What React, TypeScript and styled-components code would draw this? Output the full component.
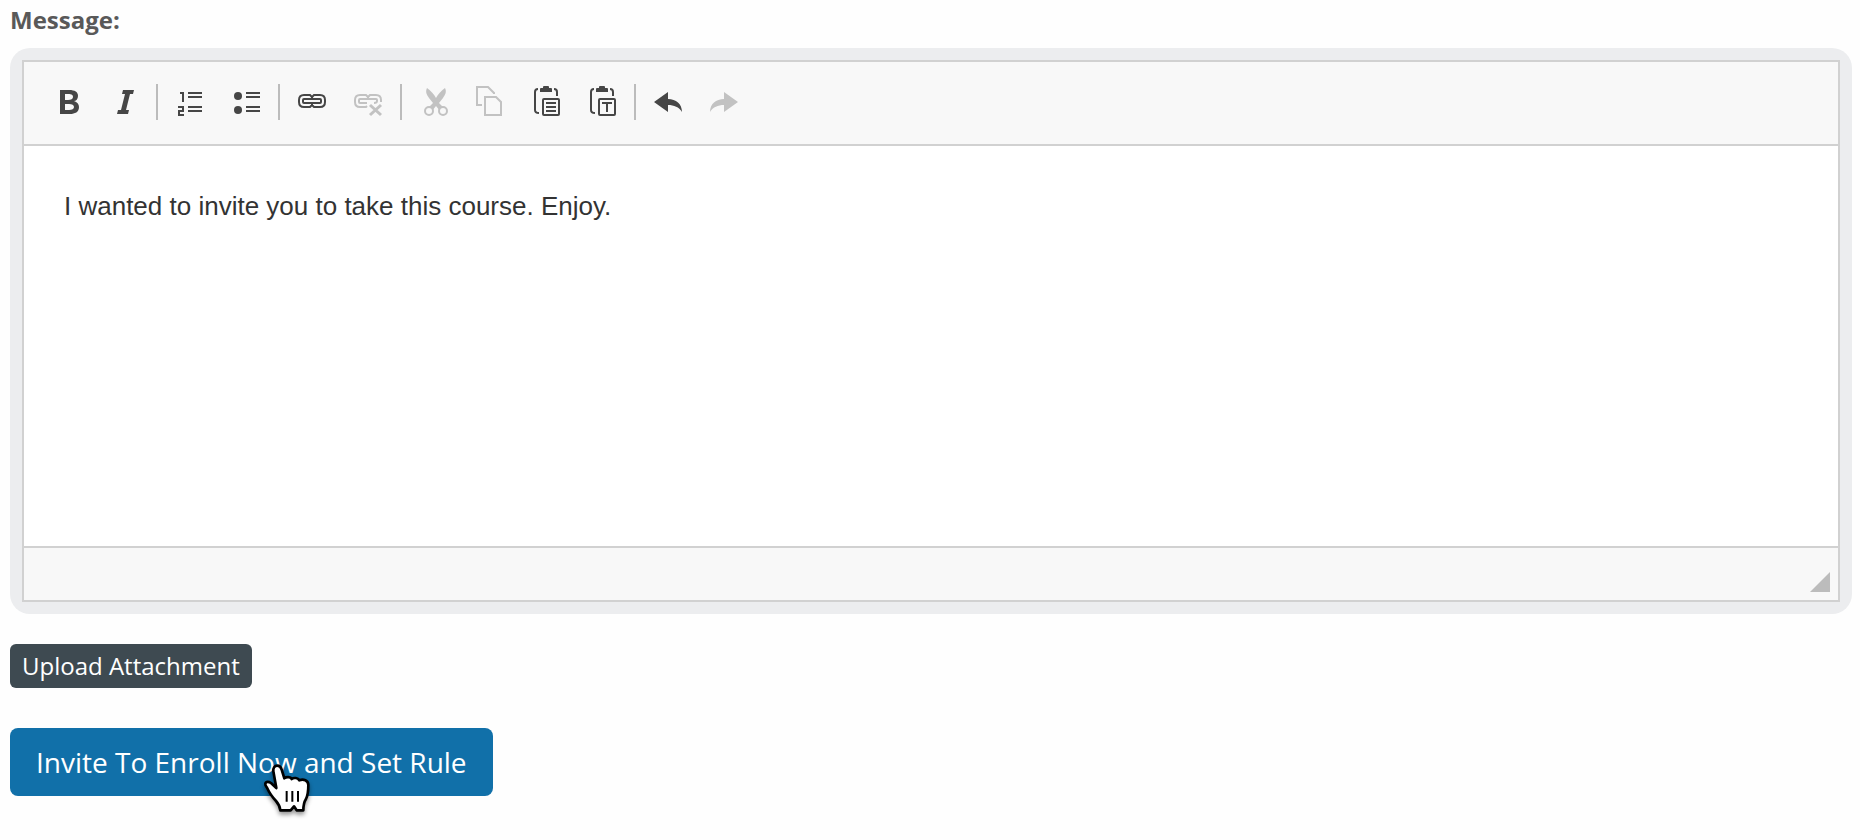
import React from "react";
import styled, { createGlobalStyle } from "styled-components";

const GlobalStyle = createGlobalStyle`
  * { box-sizing: border-box; }
  body { margin: 0; background: #fefefe; font-family: "Open Sans", sans-serif; }
`;

const Form = styled.form`
  display: flex;
  flex-direction: column;
  align-items: flex-start;
  min-height: 100vh;
  padding: 4px 8px 40px 10px;
`;

const Label = styled.label`
  margin-bottom: 12px;
  color: #595959;
  font-size: 24px;
  font-weight: 700;
  line-height: 32px;
`;

const Frame = styled.div`
  align-self: stretch;
  padding: 12px;
  border-radius: 20px;
  background: #ecedef;
`;

const Editor = styled.div`
  border: 2px solid #d1d1d1;
  background: #fff;
`;

const Toolbar = styled.div`
  display: flex;
  align-items: center;
  padding: 18px 17px 20px;
  border-bottom: 2px solid #d1d1d1;
  background: #f8f8f8;
`;

const Tool = styled.button`
  display: flex;
  align-items: center;
  justify-content: center;
  width: 56px;
  height: 44px;
  padding: 0;
  border: 0;
  background: none;
  color: #464646;
  &:disabled { color: #c2c2c2; }
`;

const Separator = styled.span`
  width: 2px;
  height: 36px;
  margin: 0 5px 0 3px;
  background: #bcbcbc;
`;

const MessageBox = styled.textarea`
  display: block;
  width: 100%;
  height: 400px;
  padding: 40px;
  border: 0;
  outline: 0;
  resize: none;
  background: #fff;
  color: #333;
  font: 26px/40px "Liberation Sans", Arial, sans-serif;
`;

const StatusBar = styled.div`
  display: flex;
  align-items: flex-end;
  justify-content: flex-end;
  height: 54px;
  padding: 8px;
  border-top: 2px solid #d1d1d1;
  background: #f8f8f8;
`;

const Actions = styled.div`
  position: relative;
  display: flex;
  flex-direction: column;
  align-items: flex-start;
  gap: 40px;
  margin-top: 30px;
`;

const Button = styled.button<{ $primary?: boolean }>`
  padding: ${(p) => (p.$primary ? "16px 26px" : "4px 12px")};
  border: 0;
  border-radius: ${(p) => (p.$primary ? 8 : 6)}px;
  background: ${(p) => (p.$primary ? "#1170a9" : "#3e4a51")};
  color: #fff;
  font-family: inherit;
  font-size: ${(p) => (p.$primary ? 28 : 24)}px;
  line-height: 36px;
  white-space: nowrap;
`;

const Pointer = styled.svg`
  position: absolute;
  left: 246px;
  top: 112px;
  filter: drop-shadow(0 3px 2px rgba(0, 0, 0, 0.4));
  pointer-events: none;
`;

const line = { fill: "none", stroke: "currentColor", strokeWidth: 2 };

const clipboard = (
  <>
    <path d="M9 3q0-1 1-1h2V1q0-1 1-1h4q1 0 1 1v1h2q1 0 1 1v3H9z" fill="currentColor" />
    <path d="M7 3Q4 3 4 6v18q0 3 4 3M23 3q3 0 3 3v4" {...line} />
    <rect x="12" y="13" width="16" height="16" rx="1" {...line} />
  </>
);

const icons: Record<string, React.ReactNode> = {
  Bold: (
    <path
      fill="currentColor"
      fillRule="evenodd"
      d="M7 4h9c6 0 9 2 9 6 0 3-2 5-4 5 3 1 5 3 5 6 0 5-4 7-9 7H7zM12 8v6h3c3 0 5-1 5-3s-1-3-5-3zM12 18v6h4c3 0 5-1 5-3s-2-3-5-3z"
    />
  ),
  Italic: <path fill="currentColor" d="M14 4h11l-1 4h-3l-4 16h3l-1 4H8l1-4h3l4-16h-3z" />,
  "Numbered list": <path d="M5 7h3v9M3 21h5v4H4v4h5M13 7h14M13 11h14M13 21h14M13 25h14" {...line} />,
  "Bulleted list": (
    <>
      <circle cx="7" cy="10" r="4" fill="currentColor" />
      <circle cx="7" cy="24" r="4" fill="currentColor" />
      <path d="M15 7h14M15 11h14M15 21h14M15 25h14" {...line} />
    </>
  ),
  Link: (
    <>
      <path d="M15 11l-2-2H7q-5 0-5 5v2q0 5 5 5h6l2-2 2 2h6q5 0 5-5v-2q0-5-5-5h-6zM15 10v3M15 17v3" {...line} />
      <rect x="6" y="13" width="18" height="4" rx="1" {...line} />
    </>
  ),
  Unlink: (
    <>
      <path d="M14 20l-1 1H7q-5 0-5-5v-2q0-5 5-5h6l2 2 2-2h6q5 0 5 5v2M15 10v3M14 17H7q-1 0-1-1v-2q0-1 1-1h16q1 0 1 1v1q0 2-3 2" {...line} />
      <path d="M17 19l11 10M28 19L17 29" fill="none" stroke="currentColor" strokeWidth="3" />
    </>
  ),
  Cut: (
    <>
      <path
        fill="currentColor"
        d="M8 2c-2 4 0 7 2 10l4 5-5 5 4 3 4-5 4 5 4-3-5-5 4-5c2-3 4-6 2-10-4 3-7 6-9 10-2-4-5-7-9-10z"
      />
      <circle cx="10" cy="25" r="4" fill="#f8f8f8" stroke="currentColor" strokeWidth="2" />
      <circle cx="24" cy="25" r="4" fill="#f8f8f8" stroke="currentColor" strokeWidth="2" />
    </>
  ),
  Copy: (
    <>
      <path d="M7 19H2V1h11l6 6v1" {...line} />
      <path d="M10 11h11l5 5v13H10z" {...line} />
    </>
  ),
  Paste: (
    <>
      {clipboard}
      <path d="M15 17h10M15 21h10M15 25h10" {...line} />
    </>
  ),
  "Paste as plain text": (
    <>
      {clipboard}
      <path d="M15 17h10M20 17v9" {...line} />
    </>
  ),
  Undo: <path fill="currentColor" d="M1 16L15 6v7c8 0 14 5 14 13-3-5-8-7-14-7v7z" />,
  Redo: <path fill="currentColor" d="M29 16L15 6v7C7 13 1 18 1 26c3-5 8-7 14-7v7z" />,
};

const groups = [
  ["Bold", "Italic"],
  ["Numbered list", "Bulleted list"],
  ["Link", "Unlink"],
  ["Cut", "Copy", "Paste", "Paste as plain text"],
  ["Undo", "Redo"],
];

const unavailable = ["Unlink", "Cut", "Copy", "Redo"];

export default function App() {
  return (
    <>
      <GlobalStyle />
      <Form onSubmit={(e) => e.preventDefault()}>
        <Label htmlFor="message">Message:</Label>
        <Frame>
          <Editor>
            <Toolbar role="toolbar" aria-label="Formatting">
              {groups.map((group, i) => (
                <React.Fragment key={group[0]}>
                  {i > 0 && <Separator />}
                  {group.map((name) => (
                    <Tool key={name} type="button" aria-label={name} disabled={unavailable.includes(name)}>
                      <svg width="32" height="32" viewBox="0 0 32 32" aria-hidden="true">
                        {icons[name]}
                      </svg>
                    </Tool>
                  ))}
                </React.Fragment>
              ))}
            </Toolbar>
            <MessageBox id="message" spellCheck={false} defaultValue="I wanted to invite you to take this course. Enjoy." />
            <StatusBar>
              <svg width="20" height="20" aria-hidden="true">
                <path d="M20 0v20H0z" fill="#bcbcbc" />
              </svg>
            </StatusBar>
          </Editor>
        </Frame>
        <Actions>
          <Button type="button">Upload Attachment</Button>
          <Button type="submit" $primary>
            Invite To Enroll Now and Set Rule
          </Button>
          <Pointer width="64" height="64" viewBox="0 0 192 192" aria-hidden="true">
            <path
              d="M64 29c8 0 11 5 13 12l8 26c6-5 19-5 22 2 6-5 19-4 23 4 12-5 27 0 27 14 0 18-1 30-7 42-6 9-8 17-8 34h-20l-8-12-10 12H73c-1-12-6-20-13-28-11-12-19-22-25-36-4-8-8-10-7-16 2-8 11-6 17-2l16 15-9-50c-1-9 3-17 12-17z"
              fill="#fff"
              stroke="#000"
              strokeWidth="8"
              strokeLinejoin="round"
            />
            <path d="M92 105v32M109 105v32M126 105v32" stroke="#000" strokeWidth="6" />
          </Pointer>
        </Actions>
      </Form>
    </>
  );
}
